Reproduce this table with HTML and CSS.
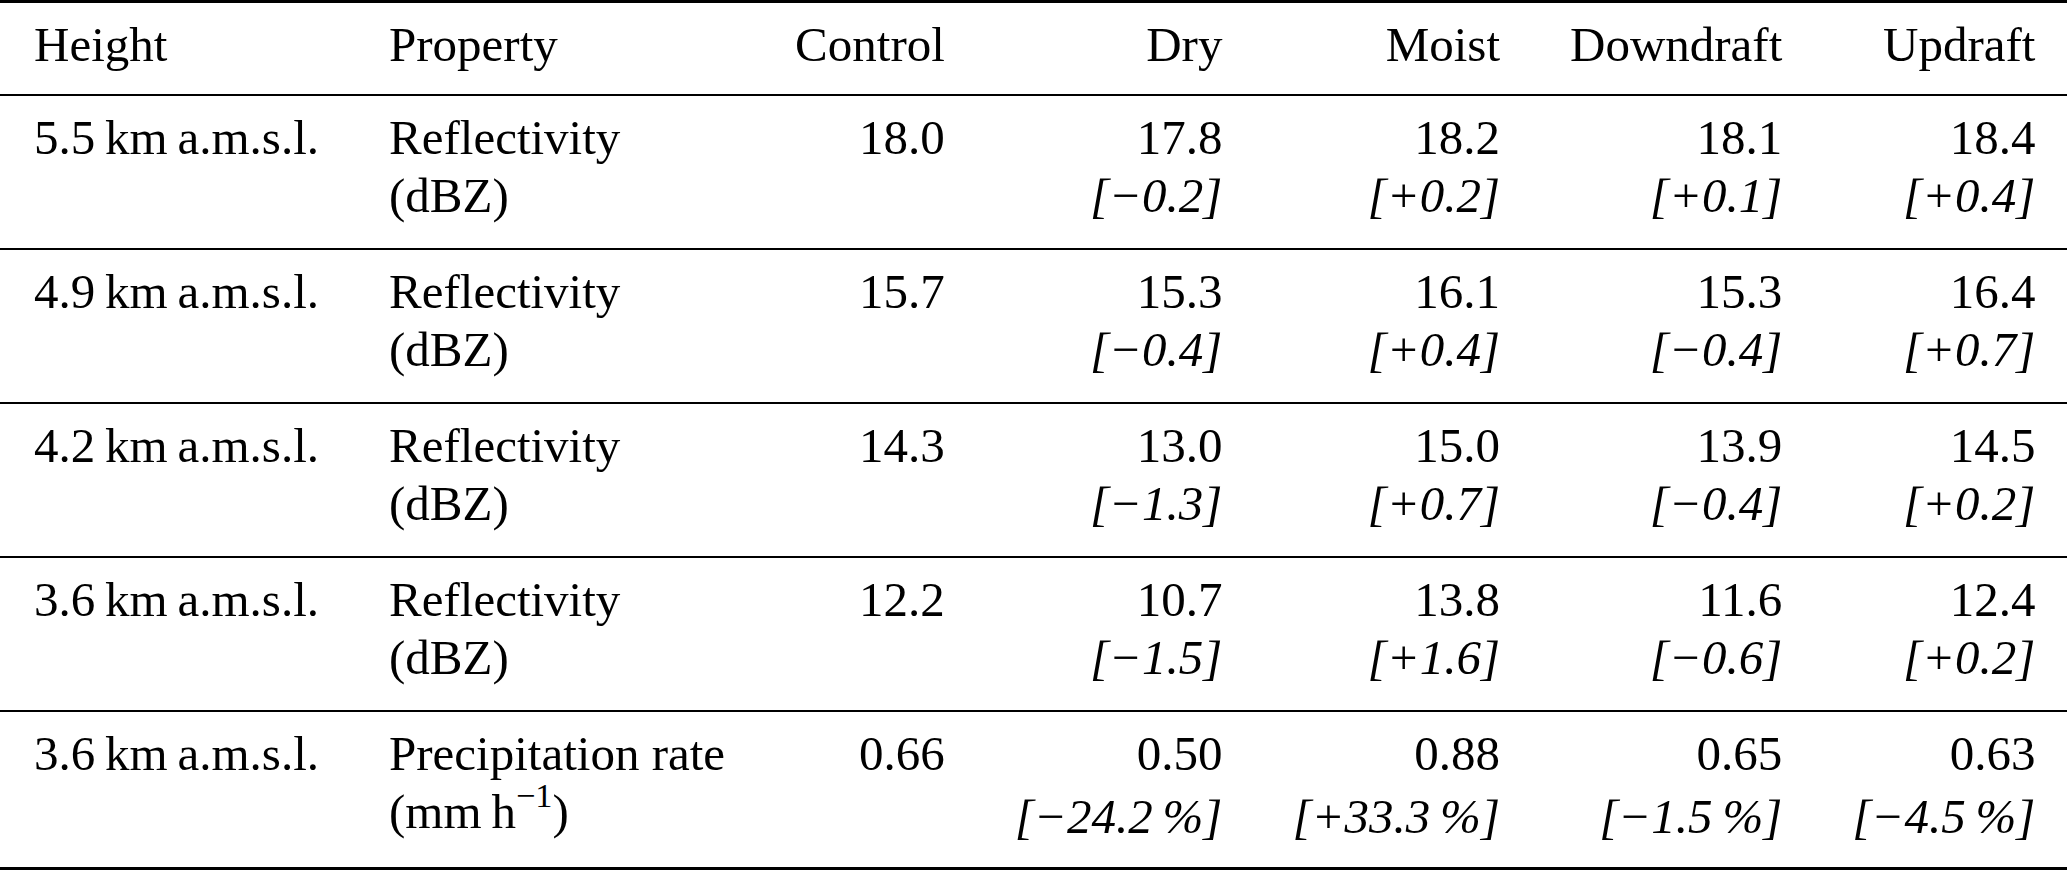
FILE: index.html
```html
<!DOCTYPE html>
<html lang="en">
<head>
<meta charset="utf-8">
<title>Table</title>
<link rel="stylesheet" href="styles.css">
</head>
<body>
<table class="data">
  <thead>
    <tr>
      <th class="l first">Height</th>
      <th class="l">Property</th>
      <th class="r">Control</th>
      <th class="r">Dry</th>
      <th class="r">Moist</th>
      <th class="r">Downdraft</th>
      <th class="r last">Updraft</th>
    </tr>
  </thead>
  <tbody>
    <tr>
      <td class="l first">5.5&#8201;km&#8201;a.m.s.l.</td>
      <td class="l">Reflectivity<br>(dBZ)</td>
      <td class="r">18.0</td>
      <td class="r">17.8<br><i>[&minus;0.2]</i></td>
      <td class="r">18.2<br><i>[+0.2]</i></td>
      <td class="r">18.1<br><i>[+0.1]</i></td>
      <td class="r last">18.4<br><i>[+0.4]</i></td>
    </tr>
    <tr>
      <td class="l first">4.9&#8201;km&#8201;a.m.s.l.</td>
      <td class="l">Reflectivity<br>(dBZ)</td>
      <td class="r">15.7</td>
      <td class="r">15.3<br><i>[&minus;0.4]</i></td>
      <td class="r">16.1<br><i>[+0.4]</i></td>
      <td class="r">15.3<br><i>[&minus;0.4]</i></td>
      <td class="r last">16.4<br><i>[+0.7]</i></td>
    </tr>
    <tr>
      <td class="l first">4.2&#8201;km&#8201;a.m.s.l.</td>
      <td class="l">Reflectivity<br>(dBZ)</td>
      <td class="r">14.3</td>
      <td class="r">13.0<br><i>[&minus;1.3]</i></td>
      <td class="r">15.0<br><i>[+0.7]</i></td>
      <td class="r">13.9<br><i>[&minus;0.4]</i></td>
      <td class="r last">14.5<br><i>[+0.2]</i></td>
    </tr>
    <tr>
      <td class="l first">3.6&#8201;km&#8201;a.m.s.l.</td>
      <td class="l">Reflectivity<br>(dBZ)</td>
      <td class="r">12.2</td>
      <td class="r">10.7<br><i>[&minus;1.5]</i></td>
      <td class="r">13.8<br><i>[+1.6]</i></td>
      <td class="r">11.6<br><i>[&minus;0.6]</i></td>
      <td class="r last">12.4<br><i>[+0.2]</i></td>
    </tr>
    <tr class="final">
      <td class="l first">3.6&#8201;km&#8201;a.m.s.l.</td>
      <td class="l">Precipitation rate<br>(mm&#8201;h<sup>&minus;1</sup>)</td>
      <td class="r">0.66</td>
      <td class="r">0.50<br><i>[&minus;24.2&#8201;%]</i></td>
      <td class="r">0.88<br><i>[+33.3&#8201;%]</i></td>
      <td class="r">0.65<br><i>[&minus;1.5&#8201;%]</i></td>
      <td class="r last">0.63<br><i>[&minus;4.5&#8201;%]</i></td>
    </tr>
  </tbody>
</table>
</body>
</html>
```

FILE: styles.css
```css
html, body {
  margin: 0;
  padding: 0;
  background: #ffffff;
}

body {
  font-family: "Liberation Serif", "Times New Roman", serif;
  font-size: 49px;
  line-height: 58px;
  color: #000000;
}

.data {
  border-collapse: collapse;
  border-spacing: 0;
  width: 2067px;
  border-top: 3px solid #000000;
  border-bottom: 3px solid #000000;
}

.data th,
.data td {
  font-weight: normal;
  white-space: nowrap;
  vertical-align: top;
  padding: 13px 35px 23px 35px;
}

.data th {
  padding-bottom: 20px;
}

.data thead tr {
  border-bottom: 2px solid #000000;
}

.data tbody tr {
  border-bottom: 2px solid #000000;
}

.data tbody tr.final {
  border-bottom: 3px solid #000000;
}

.data tr.final td {
  padding-bottom: 26px;
}

.data tr.final td.r {
  line-height: 63px;
  padding-top: 10px;
  padding-bottom: 19px;
}

.l {
  text-align: left;
}

.r {
  text-align: right;
}

.first {
  padding-left: 34px !important;
}

.last {
  padding-right: 34px !important;
}

.data i {
  font-style: italic;
}

.data sup {
  font-size: 0.7em;
  line-height: 0;
  vertical-align: 0.6em;
}
```
